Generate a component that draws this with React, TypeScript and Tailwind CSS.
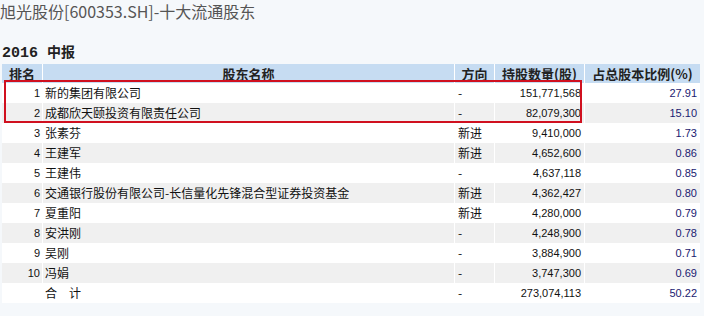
const rows = [
  { rank: '1', name: '新的集团有限公司', dir: '-', shares: '151,771,568', ratio: '27.91' },
  { rank: '2', name: '成都欣天颐投资有限责任公司', dir: '-', shares: '82,079,300', ratio: '15.10' },
  { rank: '3', name: '张素芬', dir: '新进', shares: '9,410,000', ratio: '1.73' },
  { rank: '4', name: '王建军', dir: '新进', shares: '4,652,600', ratio: '0.86' },
  { rank: '5', name: '王建伟', dir: '-', shares: '4,637,118', ratio: '0.85' },
  { rank: '6', name: '交通银行股份有限公司-长信量化先锋混合型证券投资基金', dir: '新进', shares: '4,362,427', ratio: '0.80' },
  { rank: '7', name: '夏重阳', dir: '新进', shares: '4,280,000', ratio: '0.79' },
  { rank: '8', name: '安洪刚', dir: '-', shares: '4,248,900', ratio: '0.78' },
  { rank: '9', name: '吴刚', dir: '-', shares: '3,884,900', ratio: '0.71' },
  { rank: '10', name: '冯娟', dir: '-', shares: '3,747,300', ratio: '0.69' },
  { rank: '', name: '合　计', dir: '-', shares: '273,074,113', ratio: '50.22' },
]

const cjk = "font-['Noto_Sans_CJK_SC',sans-serif]"
const num = "font-['Liberation_Sans','Noto_Sans_CJK_SC',sans-serif]"

export default function App() {
  return (
    <div className="w-[704px] h-[316px] bg-[#f5f8fb] overflow-hidden text-[#111]">
      {/* title */}
      <div className={`${cjk} text-[16px] leading-[24px] h-[24px] -mt-[1px] text-[#555] whitespace-nowrap`}>
        旭光股份[600353.SH]-十大流通股东
      </div>
      <div className="mt-[18px] h-[20px] leading-[20px] pl-[2px] text-[14px] font-bold text-[#222] whitespace-nowrap">
        <span className="font-['Liberation_Mono',monospace] text-[15px]">2016</span>
        <span className={`${cjk} ml-[9px]`}>中报</span>
      </div>

      {/* table */}
      <div className="relative mt-[3px] ml-[2px] w-[698px]">
        <div className={`grid grid-cols-[40px_411px_39px_89px_115px] gap-x-px bg-white h-[19px] ${cjk} text-[13px] font-bold leading-[19px] text-[#222]`}>
          <div className="bg-[#c6dcf2] text-center">排名</div>
          <div className="bg-[#c6dcf2] text-center">股东名称</div>
          <div className="bg-[#c6dcf2] text-center">方向</div>
          <div className="bg-[#c6dcf2] text-center">持股数量(股)</div>
          <div className="bg-[#c6dcf2] text-center">占总股本比例(%)</div>
        </div>
        {rows.map((r, i) => {
          const bg = i % 2 === 1 ? 'bg-[#f0f0f0]' : 'bg-white'
          return (
            <div
              key={i}
              className="grid grid-cols-[40px_411px_39px_89px_115px] gap-x-px bg-white h-[20px] leading-[20px] whitespace-nowrap"
            >
              <div className={`${bg} ${num} text-[11px] text-right pr-[2px]`}>{r.rank}</div>
              <div className={`${bg} ${cjk} text-[12px] pl-[2px] overflow-hidden`}>{r.name}</div>
              <div className={`${bg} ${cjk} text-[12px] pl-[3px]`}>{r.dir}</div>
              <div className={`${bg} ${num} text-[11px] text-right pr-[3px]`}>{r.shares}</div>
              <div className={`${bg} ${num} text-[11px] text-right pr-[3px] text-[#1a1a70]`}>{r.ratio}</div>
            </div>
          )
        })}
        {/* highlight box over top two rows */}
        <div className="absolute left-[2px] top-[16px] w-[578px] h-[43px] border-2 border-[#d0101f] pointer-events-none" />
      </div>
    </div>
  )
}
